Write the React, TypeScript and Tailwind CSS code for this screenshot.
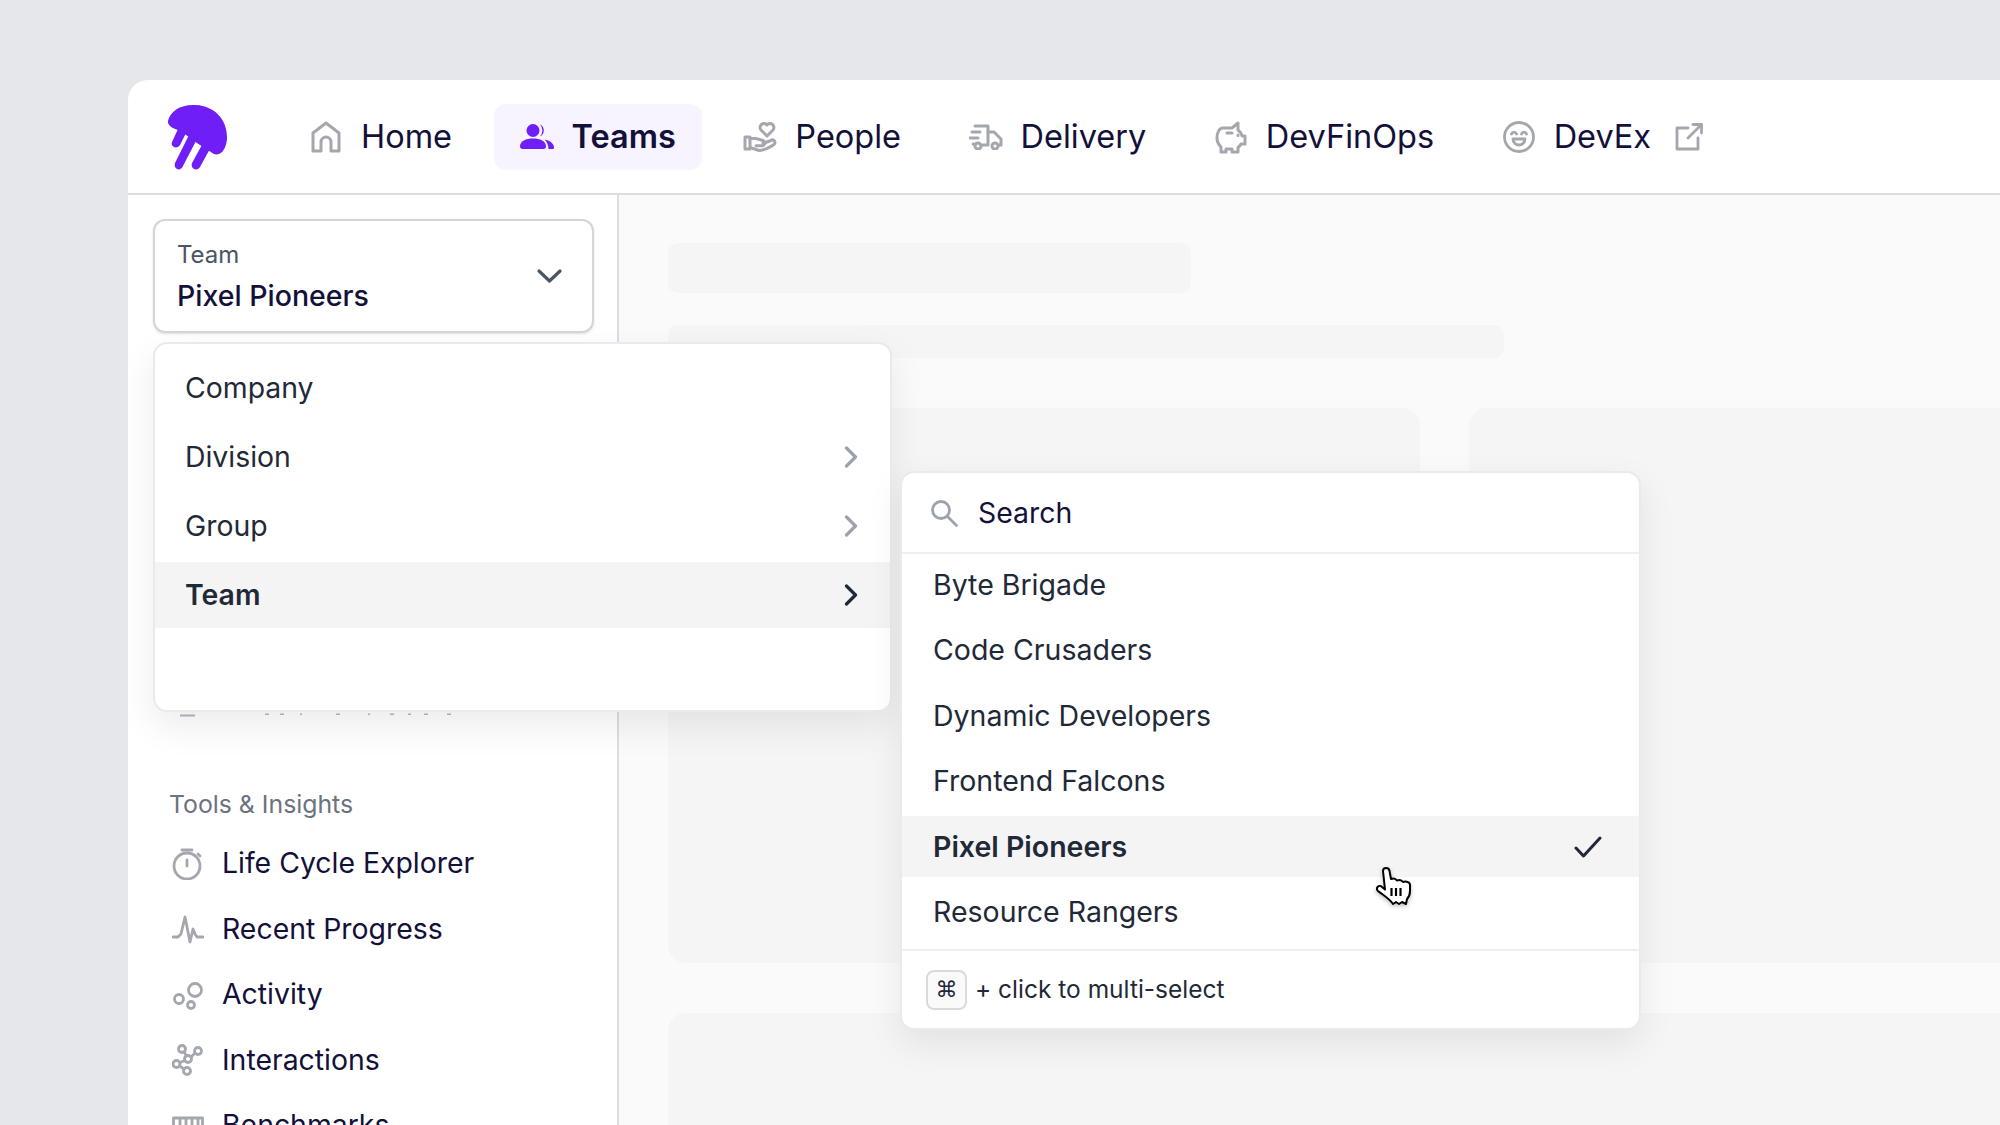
import React from 'react'

const HomeIcon = () => (
  <svg viewBox="0 0 34 34" className="w-[34px] h-[34px]" fill="none" stroke="#a4a7ae" strokeWidth="3" strokeLinejoin="round">
    <path d="M4 31V13L17 3l13 10v18h-8v-9a5 5 0 0 0-10 0v9z" />
  </svg>
)

const TeamsIcon = () => (
  <svg viewBox="0 0 34 25" className="w-[34px] h-[25px]" fill="#6f1ff5">
    <circle cx="13" cy="6.500" r="6.500" />
    <path d="M20 .6a6.500 6.500 0 0 1 0 11.800 8.500 8.500 0 0 0 0-11.800z" />
    <path d="M0 22.500C0 17 6 14.500 13 14.500s13 2.500 13 8c0 1.500-1 2.500-2.500 2.500h-21C1 25 0 24 0 22.500z" />
    <path d="M24.500 15.500c5 .8 9.500 4 9.500 8 0 1-.6 1.500-1.500 1.500H28.500c0-3.500-1.300-7-4-9.500z" />
  </svg>
)

const PeopleIcon = () => (
  <svg viewBox="0 0 34 32" className="w-[34px] h-[32px]" fill="none" stroke="#a4a7ae" strokeWidth="3" strokeLinecap="round" strokeLinejoin="round">
    <path d="M24 15l-6-6a3.700 3.700 0 0 1 6-5 3.700 3.700 0 0 1 6 5z" />
    <path d="M2 16h5v12H2z" />
    <path d="M7 17.500h6l7 2a2.700 2.700 0 0 1-1 5.200h-6" />
    <path d="M7 26.500l9 3c4 0 11-3 15-6a2.500 2.500 0 0 0-3-4l-8 3" />
  </svg>
)

const DeliveryIcon = () => (
  <svg viewBox="0 0 34 26" className="w-[34px] h-[26px]" fill="none" stroke="#a4a7ae" strokeWidth="3" strokeLinecap="round" strokeLinejoin="round">
    <path d="M6 2h13v19h-6" />
    <path d="M3 8h8M1 14h8M4 20h1" />
    <path d="M19 8h6l7 7v6h-2" />
    <circle cx="9" cy="22" r="3" />
    <circle cx="26" cy="22" r="3" />
  </svg>
)

const PiggyIcon = () => (
  <svg viewBox="0 0 34 34" className="w-[34px] h-[34px]" fill="none" stroke="#a4a7ae" strokeWidth="3" strokeLinecap="round" strokeLinejoin="round">
    <path d="M9 8h9l6-5v7c2 1.500 3.500 3.500 4 6h3v8h-4c-.8 1.500-1.800 2.500-3 3.500V32h-6v-3h-6v3H7v-5C4 24 3 21 3 18c0-5 2-10 6-10z" />
    <path d="M13 13h5M24 15v.5" />
  </svg>
)

const LaughIcon = () => (
  <svg viewBox="0 0 34 34" className="w-[34px] h-[34px]" fill="none" stroke="#a4a7ae" strokeWidth="2.800" strokeLinecap="round" strokeLinejoin="round">
    <circle cx="17" cy="17" r="14.500" />
    <path d="M9.500 14c1-2.500 4-2.500 5 0M19.500 14c1-2.500 4-2.500 5 0" />
    <path d="M11 19h12a6 6 0 0 1-12 0z" />
  </svg>
)

const ExternalIcon = () => (
  <svg viewBox="0 0 28 28" className="w-[28px] h-[28px]" fill="none" stroke="#a4a7ae" strokeWidth="2.800" strokeLinecap="round" strokeLinejoin="round">
    <path d="M13 5H2v21h21V15" />
    <path d="M18 1.500h8.500V10M26.500 1.500L13 15" />
  </svg>
)

const Logo = () => (
  <svg viewBox="0 0 61 66" className="w-[61px] h-[66px]" fill="#6f1ff5">
    <path d="M1 17C3 7 14 0 29 1c18 1 31 14 31 32 0 8-3 15-8 17-3 1-6 0-8-2l-2-1c-9-6-18-12-27-19C9 25 0 23 1 17z" />
    <path d="M11 25l8 4-6 12c-1 2-4 3-6 2s-3-3-2-5z" />
    <path d="M22 31l8 4-14 27c-1 3-4 4-6 3s-3-4-2-6z" />
    <path d="M36 39l8 4-11 20c-1 2-4 3-6 2s-3-4-2-6z" />
  </svg>
)

const ChevronRight = ({ dark }: { dark?: boolean }) => (
  <svg viewBox="0 0 14 22" className="w-[14px] h-[22px]" fill="none" stroke={dark ? '#1f2937' : '#9ca3af'} strokeWidth="3.200" strokeLinecap="round" strokeLinejoin="round">
    <path d="M2.500 2l9 9-9 9" />
  </svg>
)

const sideIcon = 'w-[32px] h-[32px] shrink-0'
const sideStroke = { fill: 'none', stroke: '#a4a7ae', strokeWidth: 2.800, strokeLinecap: 'round', strokeLinejoin: 'round' } as const

const tools: { label: string; icon: React.ReactNode }[] = [
  {
    label: 'Life Cycle Explorer',
    icon: (
      <svg viewBox="0 0 32 32" className={sideIcon} {...sideStroke}>
        <circle cx="15" cy="18" r="13" />
        <path d="M10 2h10M15 12v6M26 6l2 2" />
      </svg>
    ),
  },
  {
    label: 'Recent Progress',
    icon: (
      <svg viewBox="0 0 32 32" className={sideIcon} {...sideStroke}>
        <path d="M1 24h5l3-3 4-17 5 25 3-13 2 5 2 3h6" />
      </svg>
    ),
  },
  {
    label: 'Activity',
    icon: (
      <svg viewBox="0 0 32 32" className={sideIcon} {...sideStroke}>
        <circle cx="23" cy="11" r="6.500" />
        <circle cx="7" cy="20" r="4.500" />
        <circle cx="19" cy="26" r="3.500" />
      </svg>
    ),
  },
  {
    label: 'Interactions',
    icon: (
      <svg viewBox="0 0 32 32" className={sideIcon} {...sideStroke}>
        <circle cx="10" cy="5" r="3.500" />
        <circle cx="26" cy="7" r="3.500" />
        <circle cx="16" cy="15" r="3.500" />
        <circle cx="4.500" cy="20" r="3.500" />
        <circle cx="15" cy="27" r="3.500" />
        <path d="M12 8l2.500 4M23 9l-4 4M13 16.500l-5 2M7.500 22l4.500 3" />
      </svg>
    ),
  },
  {
    label: 'Benchmarks',
    icon: (
      <svg viewBox="0 0 32 32" className={sideIcon} {...sideStroke}>
        <path d="M1.500 8h29v16h-29zM8 8v8M14 8v8M20 8v8M26 8v8" />
      </svg>
    ),
  },
]

const NavItem = ({ icon, label, active, children }: { icon: React.ReactNode; label: string; active?: boolean; children?: React.ReactNode }) => (
  <div className={active ? 'flex items-center gap-[18px] h-[66px] px-[26px] rounded-[12px] bg-[#f7f4ff]' : 'flex items-center gap-[18px] h-[66px] px-[26px]'}>
    <span className="w-[34px] flex justify-center">{icon}</span>
    <span className={active ? 'pt-[2px] text-[32.500px] font-semibold text-[#13103a]' : 'pt-[2px] text-[32.500px] text-[#13103a]'}>{label}</span>
    {children}
  </div>
)

const teams = ['Byte Brigade', 'Code Crusaders', 'Dynamic Developers', 'Frontend Falcons', 'Pixel Pioneers', 'Resource Rangers']
const levels = ['Company', 'Division', 'Group', 'Team']

export default function App() {
  return (
    <div className="w-[2000px] h-[1125px] overflow-hidden bg-[#e5e7eb] pt-[80px] pl-[128px] font-['Inter',sans-serif]">
      <div className="relative w-[1872px] h-[1045px] bg-white rounded-tl-[20px] flex flex-col overflow-hidden">
        {/* Header */}
        <header className="h-[115px] shrink-0 border-b-2 border-[#dcdde1] flex items-center pl-[39px]">
          <div className="mr-[55px]">
            <Logo />
          </div>
          <nav className="flex items-center gap-[15.500px]">
            <NavItem icon={<HomeIcon />} label="Home" />
            <NavItem icon={<TeamsIcon />} label="Teams" active />
            <NavItem icon={<PeopleIcon />} label="People" />
            <NavItem icon={<DeliveryIcon />} label="Delivery" />
            <NavItem icon={<PiggyIcon />} label="DevFinOps" />
            <NavItem icon={<LaughIcon />} label="DevEx">
              <span className="ml-[6px]">
                <ExternalIcon />
              </span>
            </NavItem>
          </nav>
        </header>

        <div className="flex flex-1 min-h-0">
          {/* Sidebar */}
          <aside className="w-[491px] shrink-0 border-r-2 border-[#dcdde1] pt-[24px]">
            <div className="ml-[25px] w-[441px] h-[114px] border-2 border-[#d4d5da] rounded-[12px] shadow-sm flex items-center justify-between pl-[22px] pr-[30px]">
              <div className="flex flex-col pt-[2px]">
                <span className="text-[24px] leading-[36px] text-[#4b5563]">Team</span>
                <span className="mt-[2px] text-[28.500px] leading-[42px] font-medium text-[#13103a]">Pixel Pioneers</span>
              </div>
              <svg viewBox="0 0 25 14" className="w-[25px] h-[14px]" fill="none" stroke="#4b5563" strokeWidth="3.200" strokeLinecap="round" strokeLinejoin="round">
                <path d="M2 2l10.500 10L23 2" />
              </svg>
            </div>

            {/* tail ends of the row that the menu covers */}
            <svg viewBox="0 0 300 6" className="ml-[37px] mt-[379px] w-[300px] h-[6px]" fill="#b4b6bc">
              <rect x="15" y="2.500" width="15" height="2" />
              <rect x="100" y="1.500" width="4" height="1.500" />
              <rect x="115" y="1.500" width="4" height="1.500" />
              <rect x="135" y="1.500" width="2" height="1.500" />
              <rect x="171" y="1.500" width="4" height="1.500" />
              <rect x="203" y="1.500" width="2" height="1.500" />
              <rect x="225" y="1.500" width="4" height="1.500" />
              <rect x="243" y="1.500" width="3" height="1.500" />
              <rect x="259" y="1.500" width="4" height="1.500" />
              <rect x="282" y="1.500" width="4" height="1.500" />
            </svg>

            <div className="mt-[70px] ml-[41px] text-[24.800px] leading-[32px] text-[#6b7280]">Tools &amp; Insights</div>
            <div className="mt-[11px] ml-[44px] flex flex-col">
              {tools.map((t) => (
                <div key={t.label} className="h-[65.500px] shrink-0 flex items-center gap-[18px]">
                  {t.icon}
                  <span className="text-[28.400px] text-[#13103a]">{t.label}</span>
                </div>
              ))}
            </div>
          </aside>

          {/* Loading skeleton */}
          <main className="flex-1 min-w-0 bg-[#fafafa] pt-[48px] pl-[49px] overflow-hidden">
            <div className="w-[523px] h-[50px] rounded-[10px] bg-[#f5f5f5]" />
            <div className="mt-[32px] w-[836px] h-[33px] rounded-[10px] bg-[#f5f5f5]" />
            <div className="mt-[50px] flex gap-[49px]">
              <div className="w-[752px] h-[555px] shrink-0 rounded-[18px] bg-[#f5f5f5]" />
              <div className="w-[752px] h-[555px] shrink-0 rounded-[18px] bg-[#f5f5f5]" />
            </div>
            <div className="mt-[50px] h-[200px] rounded-tl-[18px] bg-[#f5f5f5]" />
          </main>
        </div>

        {/* Level menu */}
        <div className="absolute left-[25px] top-[262px] w-[739px] h-[370px] bg-white border-2 border-[#e9eaed] rounded-[14px] shadow-[0_14px_36px_rgba(0,0,0,0.08)] pt-[11px] overflow-hidden flex flex-col gap-[3px]">
          {levels.map((l) => {
            const on = l === 'Team'
            return (
              <div key={l} className={on ? 'h-[66px] shrink-0 flex items-center justify-between pl-[30px] pr-[32px] bg-[#f4f4f5]' : 'h-[66px] shrink-0 flex items-center justify-between pl-[30px] pr-[32px]'}>
                <span className={on ? 'text-[28.400px] font-semibold text-[#1f2937]' : 'text-[28.400px] text-[#1f2937]'}>{l}</span>
                {l !== 'Company' && <ChevronRight dark={on} />}
              </div>
            )
          })}
        </div>

        {/* Team picker */}
        <div className="absolute left-[772px] top-[391px] w-[741px] h-[559px] bg-white border-2 border-[#e9eaed] rounded-[14px] shadow-[0_14px_36px_rgba(0,0,0,0.08)] overflow-hidden flex flex-col">
          <div className="h-[81px] shrink-0 flex items-center gap-[20px] pl-[28px] pt-[1px] border-b-2 border-[#eeeff1]">
            <svg viewBox="0 0 28 28" className="w-[28px] h-[28px]" fill="none" stroke="#9ca3af" strokeWidth="2.800" strokeLinecap="round">
              <circle cx="11" cy="11" r="8.500" />
              <path d="M17.500 17.500l9 9" />
            </svg>
            <span className="text-[28.400px] text-[#13103a]">Search</span>
          </div>
          <div className="flex flex-col gap-[4.500px] pb-[6.500px] border-b-2 border-[#eeeff1]">
            {teams.map((name) => {
              const on = name === 'Pixel Pioneers'
              return (
                <div key={name} className={on ? 'h-[61px] shrink-0 flex items-center justify-between pl-[31px] pr-[37px] bg-[#f4f4f5]' : 'h-[61px] shrink-0 flex items-center justify-between pl-[31px] pr-[37px]'}>
                  <span className={on ? 'pt-[1px] text-[28.500px] font-semibold text-[#1f2937]' : 'pt-[1px] text-[28.500px] text-[#1f2937]'}>{name}</span>
                  {on && (
                    <svg viewBox="0 0 28 22" className="w-[28px] h-[22px]" fill="none" stroke="#1f2937" strokeWidth="3" strokeLinecap="round" strokeLinejoin="round">
                      <path d="M2 12l7.500 8L26 2" />
                    </svg>
                  )}
                </div>
              )
            })}
          </div>
          <div className="flex-1 flex items-center gap-[8px] pl-[24px]">
            <span className="w-[41px] h-[40px] flex items-center justify-center rounded-[8px] border-2 border-[#d9dadf] bg-[#fafafa] text-[22px] text-[#1f2937] font-['DejaVu_Sans',sans-serif]">⌘</span>
            <span className="text-[24.500px] text-[#1f2937]">+ click to multi-select</span>
          </div>
        </div>

        {/* Pointer */}
        <svg viewBox="0 0 36 38" className="absolute left-[1248px] top-[787px] w-[36px] h-[38px] drop-shadow-[0_2px_2px_rgba(0,0,0,0.25)]" fill="#fff" stroke="#000" strokeWidth="2" strokeLinejoin="round">
          <path d="M7 4c0-4 6-4 6.500 0l1.500 8c2.500-1 5 0 6 1.500 2.500-1 5 0 6 1.500 3-1 7 0 7 3v6c0 3-1 6-3 8l-1 5-4-2-3 2-3-2-3 2c-3-5-10-9-15-13-3-3 1-7 4-4l3 2.500z" />
          <path d="M15.500 21v8M20 21v8M24.500 21v8" fill="none" strokeWidth="2.200" />
        </svg>
      </div>
    </div>
  )
}
